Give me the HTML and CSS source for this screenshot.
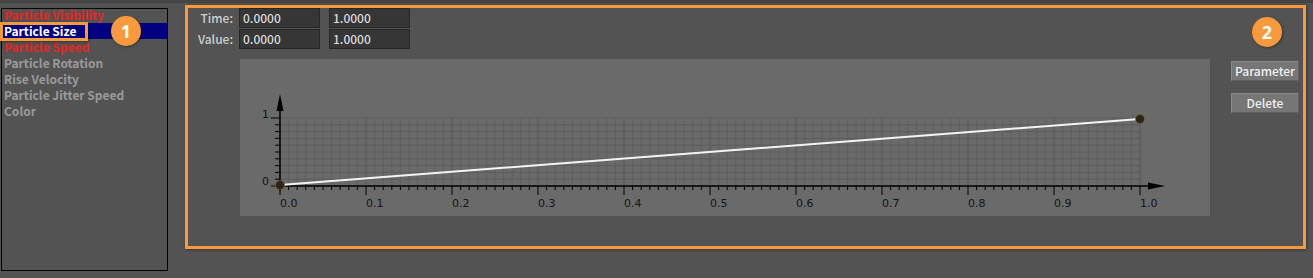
FILE: index.html
```html
<!DOCTYPE html>
<html lang="en">
<head>
    <meta charset="UTF-8">
    <title>Particle Curve Editor</title>
    <link rel="stylesheet" href="styles.css">
</head>
<body>
    <div class="app">
        <!-- property list -->
        <div class="prop-list">
            <div class="prop-item changed">Particle Visibility</div>
            <div class="prop-item selected">Particle Size</div>
            <div class="prop-item changed">Particle Speed</div>
            <div class="prop-item">Particle Rotation</div>
            <div class="prop-item">Rise Velocity</div>
            <div class="prop-item">Particle Jitter Speed</div>
            <div class="prop-item">Color</div>
        </div>

        <!-- curve editor -->
        <div class="editor">
            <div class="fields">
                <span class="field-label">Time:</span>
                <div class="field-input">0.0000</div>
                <div class="field-input">1.0000</div>
                <span class="field-label">Value:</span>
                <div class="field-input">0.0000</div>
                <div class="field-input">1.0000</div>
            </div>

            <div class="editor-body">
                <div class="chart">
                    <svg id="curve" width="970" height="157" viewBox="0 0 970 157"></svg>
                </div>
                <div class="buttons">
                    <button class="btn">Parameter</button>
                    <button class="btn">Delete</button>
                </div>
            </div>
        </div>
    </div>

    <!-- doc annotations -->
    <div class="mark-box mark-item"></div>
    <div class="mark-num mark-num-1">1</div>
    <div class="mark-box mark-editor"></div>
    <div class="mark-num mark-num-2">2</div>

    <script>
        // Draw grid, axes and the curve
        function drawCurve() {
            const svg = document.getElementById("curve");
            const ox = 40, oy = 127, w = 860, h = 68;
            let out = '';

            // minor + major grid
            for (let i = 0; i <= 100; i++) {
                const x = ox + w * i / 100;
                const major = i % 10 === 0;
                out += `<line x1="${x}" y1="${oy - h}" x2="${x}" y2="${oy}" stroke="${major ? '#545454' : '#5f5f5f'}" stroke-width="1"/>`;
            }
            for (let j = 0; j <= 10; j++) {
                const y = oy - h * j / 10;
                out += `<line x1="${ox}" y1="${y}" x2="${ox + w}" y2="${y}" stroke="#5c5c5c" stroke-width="1"/>`;
            }

            // x axis ticks + labels
            for (let i = 0; i <= 100; i++) {
                const x = ox + w * i / 100;
                const major = i % 10 === 0;
                out += `<line x1="${x}" y1="${oy}" x2="${x}" y2="${oy + (major ? 9 : 4)}" stroke="#000" stroke-width="1"/>`;
                if (major) {
                    out += `<text x="${x}" y="${oy + 21}" class="axis-label">${(i / 100).toFixed(1)}</text>`;
                }
            }

            // y axis ticks
            for (let j = 0; j <= 10; j++) {
                const y = oy - h * j / 10;
                const major = j === 0 || j === 10;
                out += `<line x1="${ox - (major ? 9 : 5)}" y1="${y}" x2="${ox}" y2="${y}" stroke="#000" stroke-width="1"/>`;
            }
            out += `<text x="${ox - 18}" y="${oy - h}" class="axis-label">1</text>`;
            out += `<text x="${ox - 18}" y="${oy - 1}" class="axis-label">0</text>`;

            // axes with arrows
            out += `<line x1="${ox}" y1="${oy + 5}" x2="${ox}" y2="50" stroke="#000" stroke-width="1.5"/>`;
            out += `<polygon points="${ox},35 ${ox - 3.5},52 ${ox + 3.5},52" fill="#000"/>`;
            out += `<line x1="${ox}" y1="${oy}" x2="${ox + w + 9}" y2="${oy}" stroke="#000" stroke-width="1.5"/>`;
            out += `<polygon points="${ox + w + 25},${oy} ${ox + w + 8},${oy - 3.5} ${ox + w + 8},${oy + 3.5}" fill="#000"/>`;

            // curve
            out += `<line x1="${ox}" y1="${oy - 1}" x2="${ox + w}" y2="${oy - h + 1}" stroke="#f4f4f4" stroke-width="2"/>`;
            out += `<circle cx="${ox}" cy="${oy - 1}" r="4.5" class="key"/>`;
            out += `<circle cx="${ox + w}" cy="${oy - h + 1}" r="4.5" class="key"/>`;

            svg.innerHTML = out;
        }

        window.onload = drawCurve;
    </script>
</body>
</html>
```

FILE: styles.css
```css
/* Reset and Base Styles */
* {
    margin: 0;
    padding: 0;
    box-sizing: border-box;
}

body {
    font-family: "Noto Sans CJK SC", "Noto Sans", sans-serif;
    background-color: #535353;
    border-top: 3px solid #444444;
    width: 1313px;
    height: 278px;
    overflow: hidden;
}

.app {
    display: flex;
    padding: 5px 0 0 1px;
}

/* Property List */
.prop-list {
    width: 167px;
    height: 263px;
    border: 1px solid #000;
    overflow: hidden;
}

.prop-item {
    font-size: 12px;
    font-weight: 700;
    line-height: 16px;
    height: 16px;
    padding-left: 2px;
    color: #9a9a9a;
}

.prop-item:first-child {
    margin-top: -2px;
}

.prop-item.changed {
    color: #e8241f;
}

.prop-item.selected {
    background-color: #000080;
    color: #ffffff;
}

/* Curve Editor */
.editor {
    margin-left: 18px;
    flex: 1;
}

.fields {
    display: grid;
    grid-template-columns: 44px 81px 81px;
    column-gap: 9px;
    row-gap: 1px;
}

.field-label {
    font-size: 12px;
    font-weight: 500;
    color: #cfcfcf;
    text-align: right;
    margin-right: -3px;
    line-height: 20px;
}

.field-input {
    height: 20px;
    background-color: #363636;
    border: 1px solid #262626;
    color: #dcdcdc;
    font-size: 12px;
    font-weight: 500;
    line-height: 18px;
    padding-left: 3px;
}

.editor-body {
    display: flex;
    margin-top: 10px;
    margin-left: 54px;
}

.chart {
    width: 970px;
    height: 157px;
    background-color: #6a6a6a;
}

.chart svg {
    display: block;
}

.axis-label {
    font-family: "DejaVu Sans", sans-serif;
    font-size: 11px;
    fill: #141414;
}

.key {
    fill: #2d2319;
    stroke: #8d6a3c;
    stroke-width: 1;
    stroke-dasharray: 1.5 1;
}

.buttons {
    display: flex;
    flex-direction: column;
    gap: 12px;
    margin-left: 21px;
    margin-top: 2px;
}

.btn {
    width: 68px;
    height: 20px;
    background-color: #767676;
    border: 1px solid #8a8a8a;
    border-right-color: #5e5e5e;
    border-bottom-color: #5e5e5e;
    color: #f0f0f0;
    font-family: "Noto Sans CJK SC", "Noto Sans", sans-serif;
    font-size: 12px;
    font-weight: 500;
    line-height: 16px;
}

/* Annotations */
.mark-box {
    position: absolute;
    border: 3px solid #f89a3b;
    box-shadow: 1px 1px 3px rgba(0, 0, 0, 0.35);
}

.mark-item {
    left: 0;
    top: 22px;
    width: 88px;
    height: 19px;
}

.mark-editor {
    left: 185px;
    top: 5px;
    width: 1121px;
    height: 244px;
}

.mark-num {
    position: absolute;
    width: 30px;
    height: 30px;
    border-radius: 50%;
    background-color: #f89a3b;
    color: #ffffff;
    font-family: "Open Sans", sans-serif;
    font-weight: 700;
    font-size: 18px;
    line-height: 30px;
    text-align: center;
    box-shadow: 1px 1px 3px rgba(0, 0, 0, 0.35);
}

.mark-num-1 {
    left: 111px;
    top: 16px;
}

.mark-num-2 {
    left: 1252px;
    top: 17px;
}
```
